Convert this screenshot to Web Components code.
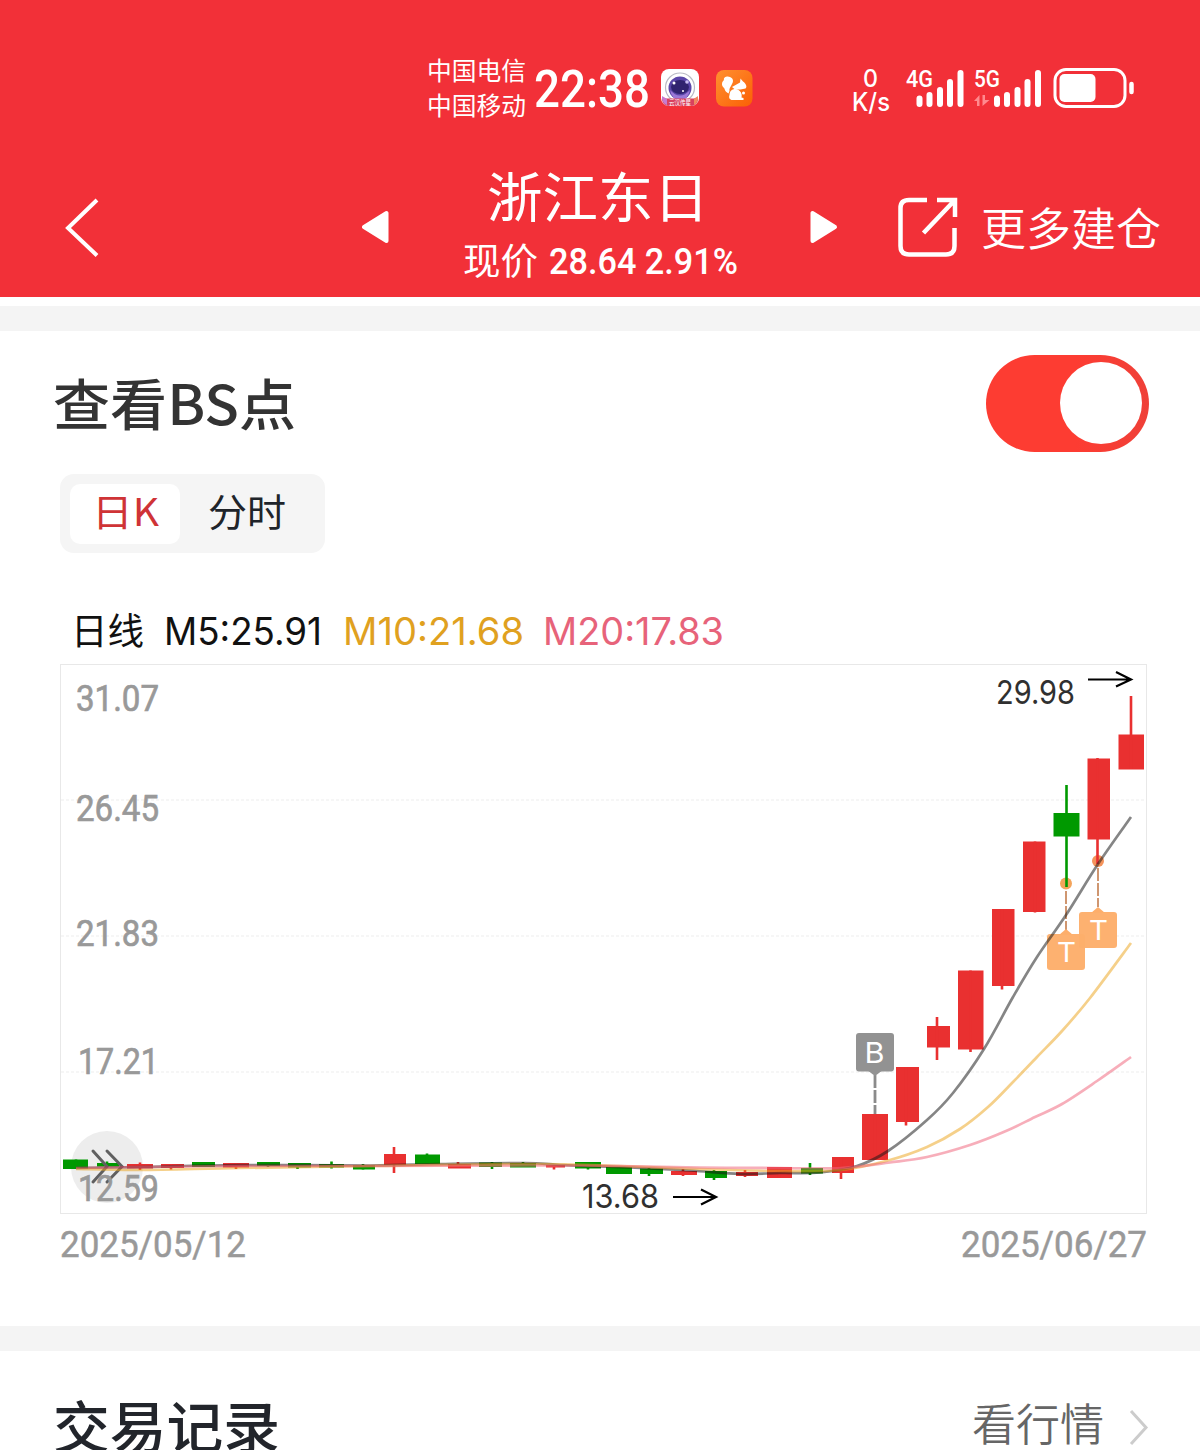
<!DOCTYPE html>
<html lang="zh-CN">
<head>
<meta charset="utf-8">
<title>浙江东日</title>
<style>
    body {
        margin: 0;
        height: 1450px;
        overflow: hidden;
        background: #fff;
        font-family: "Noto Sans CJK SC", sans-serif;
    }
</style>
</head>
<body>
<trade-page></trade-page>

<script>
const define = (name, css, html, setup) => {
    const template = document.createElement('template')
    template.innerHTML = `<style>${css}</style>${html}`

    window.customElements.define(name, class extends HTMLElement {
        constructor() {
            super()

            this
                .attachShadow({ mode: 'open' })
                .appendChild(template.content.cloneNode(true))
        }

        connectedCallback() {
            if (setup) setup(this, this.shadowRoot)
        }
    })
}

// One line of text, stretched to an exact width
define('fit-text', `
    :host {
        display: block;
        flex: none;
        white-space: nowrap;
        line-height: 1;
    }

    span {
        display: inline-block;
        transform-origin: 0 50%;
        vertical-align: top;
    }
`, '<span><slot></slot></span>', (host, root) => {
    const span = root.querySelector('span')
    const width = Number(host.getAttribute('width'))
    host.style.fontSize = `${host.getAttribute('size')}px`
    host.style.height = `${host.getAttribute('size')}px`
    host.style.width = `${width}px`
    span.style.transform = `scaleX(${width / span.getBoundingClientRect().width})`
})

define('signal-bars', `
    :host { display: block; }
    svg { display: block; overflow: visible; }
    text { font: 500 24px Roboto, sans-serif; fill: #fff; }
    .data { display: none; }
    :host([data]) .data { display: inline; }
`, `
    <svg width="68" height="40" viewBox="0 0 68 40">
        <text x="0" y="18" lengthAdjust="spacingAndGlyphs"></text>
        <path class="data" d="M0 32L5.500 26V37H3V32zM8.500 26H11V31H15.500L8.500 37z" fill="#ff8a8e"/>
        <g class="bars" stroke="#fff" stroke-width="6" stroke-linecap="round">
            <path d="M3 29.500V35M13 26V35M23.500 21V35M33.500 13V35M44 4V35"/>
        </g>
    </svg>
`, (host, root) => {
    const text = root.querySelector('text')
    text.textContent = host.getAttribute('label')
    text.setAttribute('textLength', host.getAttribute('label-width'))
    root.querySelector('.bars').setAttribute('transform', `translate(${host.getAttribute('offset')} 0)`)
})

define('status-bar', `
    :host {
        display: flex;
        height: 75px;
        padding: 50px 0 0 427px;
        align-items: flex-start;
        color: #fff;
    }

    .carriers { display: grid; gap: 10px; padding-top: 7px; }
    .clock { margin: 14px 0 0 8px; font-family: Roboto, sans-serif; font-weight: 500; }
    .apps { display: flex; gap: 17px; margin: 19px 0 0 11px; }
    .speed { display: grid; gap: 0; margin: 17px 0 0 99px; width: 38px; font: 500 24px Inter, sans-serif; justify-items: center; }
    .speed fit-text:first-child { margin-right: 2px; }
    .signals { display: flex; margin: 19px 0 0 16px; }
    .battery { margin: 17px 0 0 11px; }
    svg { display: block; }
`, `
    <div class="carriers">
        <fit-text size="25" width="99">中国电信</fit-text>
        <fit-text size="25" width="99">中国移动</fit-text>
    </div>
    <fit-text class="clock" size="51" width="116">22:38</fit-text>
    <div class="apps">
        <svg width="38" height="38" viewBox="0 0 38 38">
            <rect width="38" height="37" rx="8" fill="#fff"/>
            <circle cx="19" cy="18.500" r="14.500" fill="none" stroke="#b9bac4" stroke-width="1.200"/>
            <circle cx="19" cy="19" r="11.500" fill="#5a46a8"/>
            <ellipse cx="19" cy="18" rx="9" ry="7" fill="#30236f"/>
            <path d="M9 21q10 11 20 0q-2 10-10 10t-10-10z" fill="#9c78d6"/>
            <circle cx="13" cy="14" r="1.500" fill="#fff"/>
            <circle cx="26" cy="13" r="1.800" fill="#c9bdf2"/>
            <circle cx="22" cy="22" r="1" fill="#fff"/>
            <path d="M1 28l4 1.500h28l4-1.500v3q-1 6-8 6H9q-7 0-8-6z" fill="#d9415f"/>
            <path d="M1 27l5 3v6q-4-1-5-6z" fill="#c77bd0"/>
            <path d="M37 27l-4 3v6q3-1 4-6z" fill="#f08a5e"/>
            <text x="8" y="36" font-size="7" textLength="22" lengthAdjust="spacingAndGlyphs" fill="#fff">云汉传星</text>
        </svg>
        <svg width="37" height="38" viewBox="0 0 37 38">
            <defs>
                <linearGradient id="orange" x1="0" y1="0" x2="1" y2="1">
                    <stop offset="0" stop-color="#ff9030"/><stop offset="1" stop-color="#fb5f05"/>
                </linearGradient>
            </defs>
            <rect y="1" width="36.500" height="36.500" rx="8" fill="url(#orange)"/>
            <path d="M12.500 24.500C8 22 9.500 20 7.500 18.500C5 16 6 12.500 8 11C7 8.500 11 6.500 14 8C18 9.500 17.500 13 15.500 16C14.500 18 13 19.500 13.500 22z" fill="#fff"/>
            <path d="M16 18L24 13.500L24.500 9.500L27 12.500C30 14.500 31.500 18 29.500 19.500L24.500 20.500L19 20.500z" fill="#fff"/>
            <path d="M13.500 26C13.500 21.500 17 19.500 20 20C24.500 21 26.500 25 25.500 28.500L27.500 29V31H16.500C13.500 31 12.500 28.500 13.500 26z" fill="#fff"/>
            <circle cx="27.500" cy="24" r="1.500" fill="#fff"/>
        </svg>
    </div>
    <div class="speed">
        <fit-text size="24" width="15">0</fit-text>
        <fit-text size="25" width="38" style="margin-top:-1px">K/s</fit-text>
    </div>
    <div class="signals">
        <signal-bars label="4G" label-width="27" offset="10.500"></signal-bars>
        <signal-bars label="5G" label-width="26" offset="20" data></signal-bars>
    </div>
    <svg class="battery" width="82" height="42" viewBox="0 0 82 42">
        <rect x="2" y="2.500" width="70" height="37" rx="11" fill="none" stroke="#fff" stroke-width="3"/>
        <rect x="6.500" y="7" width="36" height="28" rx="5" fill="#fff"/>
        <path d="M78.500 17v8" stroke="#fff" stroke-width="4.500" stroke-linecap="round"/>
    </svg>
`)

define('stock-header', `
    :host {
        display: block;
        height: 297px;
        background: #f23038;
        color: #fff;
        overflow: hidden;
    }

    nav { display: flex; height: 172px; align-items: flex-start; }
    svg { display: block; flex: none; }
    .back { margin: 73px 0 0 63px; }
    .prev { margin: 85px 0 0 263px; }
    .stock { display: grid; justify-items: center; gap: 19px; margin: 43px 0 0 72px; width: 276px; }
    .name { margin-right: 4px; }
    .price { display: flex; gap: 11px; }
    .price .num { font-family: Roboto, sans-serif; font-weight: 500; margin-top: 2px; }
    .next { margin: 85px 0 0 72px; }
    .share { margin: 71px 0 0 59px; }
    .more { margin: 79px 0 0 22px; font-weight: 350; }
`, `
    <status-bar></status-bar>
    <nav>
        <svg class="back" width="36" height="60" viewBox="0 0 36 60">
            <path d="M34 2L5 30L34 57.500" fill="none" stroke="#fff" stroke-width="4"/>
        </svg>
        <svg class="prev" width="28" height="34" viewBox="0 0 28 34">
            <path d="M2 17L24.500 3V31z" fill="#fff" stroke="#fff" stroke-width="4" stroke-linejoin="round"/>
        </svg>
        <div class="stock">
            <fit-text class="name" size="54" width="222">浙江东日</fit-text>
            <div class="price">
                <fit-text size="37" width="75">现价</fit-text>
                <fit-text class="num" size="37" width="189">28.64 2.91%</fit-text>
            </div>
        </div>
        <svg class="next" width="28" height="34" viewBox="0 0 28 34">
            <path d="M25 17L2.500 3V31z" fill="#fff" stroke="#fff" stroke-width="4" stroke-linejoin="round"/>
        </svg>
        <svg class="share" width="62" height="62" viewBox="0 0 62 62">
            <path d="M30 4H12Q3.500 4 3.500 12V50Q3.500 58.500 12 58.500H49Q57.500 58.500 57.500 50V32M40 4H58V21M57 5L26.500 37" fill="none" stroke="#fff" stroke-width="4.500"/>
        </svg>
        <fit-text class="more" size="45" width="180">更多建仓</fit-text>
    </nav>
`)

define('section-divider', `
    :host { display: block; height: 25px; background: #f4f4f4; }
`, '')

define('toggle-switch', `
    :host {
        display: flex;
        box-sizing: border-box;
        width: 163px;
        height: 97px;
        padding: 7px;
        justify-content: flex-end;
        border-radius: 49px;
        background: linear-gradient(90deg, #fd3c32 55%, #ef4038);
    }

    i { width: 82px; height: 82px; border-radius: 50%; background: #fff; }
`, '<i></i>')

define('segmented-tabs', `
    :host {
        display: flex;
        box-sizing: border-box;
        width: 265px;
        height: 79px;
        padding: 10px;
        border-radius: 14px;
        background: #f5f5f5;
        color: #20242a;
    }

    .tab { display: flex; height: 60px; box-sizing: border-box; padding-top: 7px; }
    .active { width: 110px; padding-left: 22px; border-radius: 10px; background: #fff; color: #cf3336; }
    .other { padding-left: 28px; }
`, `
    <div class="tab active"><slot name="active"></slot></div>
    <div class="tab other"><slot></slot></div>
`)

// [x, width, body top, body bottom, wick x, wick top, wick bottom, rising]
const candles = [
    [63, 25, 1159.5, 1169, 76, 1159.5, 1169, 0],
    [97, 22, 1163, 1166.5, 107, 1161.5, 1166, 0],
    [127, 26, 1164, 1168.5, 140, 1162.5, 1170, 1],
    [161, 23, 1164, 1168, 171, 1164, 1169.5, 1],
    [192, 23, 1162, 1167, 203, 1162, 1167, 0],
    [223, 26, 1163, 1167.5, 236, 1163, 1169, 1],
    [257, 23, 1162, 1166, 268, 1162, 1167, 0],
    [288, 23, 1163, 1167.5, 297.5, 1163, 1169, 0],
    [319, 25, 1164, 1167.5, 331.5, 1161.5, 1168.5, 0],
    [353, 22, 1165, 1169.5, 363, 1164, 1169.5, 0],
    [384, 22, 1154, 1165, 394, 1147, 1173, 1],
    [415, 25, 1154.5, 1164, 427, 1153.5, 1164, 0],
    [448, 23, 1164, 1168.5, 458, 1162, 1168, 1],
    [479, 23, 1162.5, 1167, 492, 1162, 1169, 0],
    [510, 26, 1163, 1167.5, 523, 1162, 1167, 0],
    [546, 19, 1165, 1167.5, 554, 1165, 1169.5, 1],
    [575, 26, 1162, 1168.5, 588, 1162, 1169.5, 0],
    [606, 26, 1167, 1174, 619, 1167, 1174, 0],
    [640, 23, 1168.5, 1174, 649, 1168, 1176, 0],
    [671, 26, 1171, 1175, 683, 1169, 1176, 1],
    [705, 22, 1171, 1178, 714, 1170, 1180, 0],
    [736, 22, 1172, 1176, 745, 1170, 1177, 1],
    [767, 25, 1167, 1178, 779, 1167, 1178, 1],
    [801, 22, 1168, 1173.5, 810, 1163, 1175, 0],
    [832, 22, 1157, 1173, 841, 1157, 1179, 1],
    [862, 26, 1114, 1160, 875, 1114, 1160, 1],
    [896, 23, 1067, 1122, 906, 1067, 1125.5, 1],
    [927, 23, 1026, 1047.5, 937, 1017, 1060, 1],
    [958, 25.5, 970.5, 1049.5, 970.5, 970.5, 1052, 1],
    [992, 22.5, 909, 986, 1002, 909, 989.5, 1],
    [1023, 22.5, 841.5, 912, 1035, 841.5, 912.5, 1],
    [1053.5, 26, 813, 836.5, 1066.5, 785, 887, 0],
    [1087.5, 22.5, 758.5, 839.5, 1097.5, 758, 864, 1],
    [1118.5, 25.5, 734.5, 769.5, 1131, 696, 769, 1]
]

// M5, M10 and M20, drawn in that order
const averages = [
    ['#161616', [[76, 1168], [140, 1167], [240, 1165], [370, 1165.5], [440, 1164], [525, 1163], [560, 1165], [630, 1167.5], [690, 1170.5], [740, 1174], [780, 1173], [820, 1172.5], [857, 1166], [888, 1151], [927, 1120], [953, 1093], [984, 1049], [1013, 997], [1037, 957], [1066, 915], [1098, 864], [1131, 817]]],
    ['#eba51e', [[76, 1169], [140, 1170], [240, 1168], [370, 1166], [530, 1164], [620, 1166], [700, 1169], [780, 1171], [841, 1170], [888, 1160.5], [927, 1147], [960, 1129], [988, 1107], [1013, 1082], [1037, 1057], [1062, 1031], [1090, 998], [1131, 943]]],
    ['#f0647a', [[76, 1168], [140, 1167], [240, 1166], [370, 1166], [530, 1165.5], [620, 1166], [700, 1167.5], [780, 1168], [841, 1168], [890, 1162.5], [927, 1157], [970, 1145], [1006, 1131], [1035, 1117], [1062, 1104], [1097, 1081], [1131, 1057]]]
]

const curve = points => points.slice(1).reduce((d, point, i) => {
    const before = points[Math.max(0, i - 1)]
    const from = points[i]
    const after = points[Math.min(points.length - 1, i + 2)]
    const c1 = [from[0] + (point[0] - before[0]) / 6, from[1] + (point[1] - before[1]) / 6]
    const c2 = [point[0] - (after[0] - from[0]) / 6, point[1] - (after[1] - from[1]) / 6]
    return `${d}C${c1} ${c2} ${point}`
}, `M${points[0]}`)

const candle = ([x, w, top, bottom, cx, high, low, rising]) => `
    <g fill="${rising ? '#e93030' : '#009900'}">
        <rect x="${x}" y="${top}" width="${w}" height="${bottom - top}"/>
        <rect x="${cx - 1.3}" y="${high}" width="2.6" height="${low - high}"/>
    </g>`

const axis = [['31.07', 711, 76, 83], ['26.45', 821, 76, 83], ['21.83', 946, 76, 83], ['17.21', 1074, 78, 81], ['12.59', 1201, 78, 81]]

// The T badge hangs under its candle
const sellBadge = (x, y) => `
    <path d="M${x - 7} ${y + 1}L${x} ${y - 5}L${x + 7} ${y + 1}z" fill="#fdae6b"/>
    <rect x="${x - 19}" y="${y}" width="38" height="36" rx="3" fill="#fdae6b" fill-opacity=".97"/>
    <text x="${x - 9}" y="${y + 27.5}" textLength="19" lengthAdjust="spacingAndGlyphs" class="badge">T</text>`

define('k-line-chart', `
    :host { display: block; width: 1088px; height: 551px; }
    svg { display: block; }
    .axis { font: 400 37px Roboto, sans-serif; fill: #999; stroke: #999; stroke-width: .7px; }
    .mark { font: 400 32.5px Inter, sans-serif; fill: #303030; }
    .badge { font: 400 27px Inter, sans-serif; fill: #fff; }
    .buy { font-size: 29px; }
`, `
    <svg width="1088" height="551" viewBox="60 664 1088 551">
        <rect x="60.500" y="664.500" width="1086" height="549" fill="#fff" stroke="#e8e8e8"/>
        <path d="M61 800H1146M61 936H1146M61 1072H1146" stroke="#f3f3f3" stroke-width="1.500" stroke-dasharray="3 2"/>
        <circle cx="107" cy="1167" r="36" fill="#ededed"/>
        <circle cx="1066" cy="883.500" r="6" fill="#f4a45b"/>
        <circle cx="1098" cy="861" r="6" fill="#f4935b"/>
        ${candles.map(candle).join('')}
        <path d="M93 1151L107 1166.500L93 1182M107 1151L122 1166.500L107 1182" fill="none" stroke="#606060" stroke-width="3" stroke-linecap="round"/>
        <g stroke-width="2" stroke-dasharray="13 2" fill="none">
            <path d="M875 1075V1114" stroke="#8b8b8b" stroke-width="2.800"/>
            <path d="M1066 891V930M1098 868V907" stroke="#cf9670"/>
        </g>
        ${sellBadge(1066, 934)}
        ${sellBadge(1098, 912)}
        <path d="M867 1070H883L875 1076z" fill="#929292"/>
        <rect x="856" y="1033" width="38" height="38.500" rx="3" fill="#929292"/>
        <text class="badge buy" x="864.500" y="1062.500" textLength="20" lengthAdjust="spacingAndGlyphs">B</text>
        ${averages.map(([color, points]) => `<path d="${curve(points)}" fill="none" stroke="${color}" stroke-opacity=".52" stroke-width="2.700"/>`).join('')}
        ${axis.map(([label, y, x, width]) => `<text class="axis" x="${x}" y="${y}" textLength="${width}" lengthAdjust="spacingAndGlyphs">${label}</text>`).join('')}
        <text class="mark" x="996" y="704" textLength="79" lengthAdjust="spacingAndGlyphs">29.98</text>
        <text class="mark" x="582" y="1208" textLength="77" lengthAdjust="spacingAndGlyphs">13.68</text>
        <path d="M1088 679.500H1130M1116 672L1131 679.500L1116 686.500M673 1197H715M701 1189.500L716 1197L701 1204.500" fill="none" stroke="#000" stroke-width="2.200"/>
    </svg>
`)

define('ma-legend', `
    :host { display: flex; padding: 59px 0 0 11px; color: #111; font-family: Inter, sans-serif; }
    .name { font-family: "Noto Sans CJK SC", sans-serif; margin-top: -1px; }
    .m5 { margin-left: 20px; }
    .m10 { margin-left: 21px; color: #e0a11f; }
    .m20 { margin-left: 19px; color: #e7637a; }
`, `
    <fit-text class="name" size="37" width="73">日线</fit-text>
    <fit-text class="m5" size="38" width="158">M5:25.91</fit-text>
    <fit-text class="m10" size="38" width="181">M10:21.68</fit-text>
    <fit-text class="m20" size="38" width="181">M20:17.83</fit-text>
`)

define('bs-panel', `
    :host { display: block; height: 995px; box-sizing: border-box; padding: 24px 51px 0 60px; }
    header { display: flex; justify-content: space-between; align-items: flex-start; color: #333; font-weight: 500; margin-left: -7px; }
    header fit-text { margin-top: 19px; }
    segmented-tabs { margin-top: 22px; }
    k-line-chart { margin-top: 14px; }
    footer { display: flex; justify-content: space-between; width: 1087px; padding-top: 11px; color: #999; font-family: Roboto, sans-serif; -webkit-text-stroke: .5px #999; }
`, `
    <header>
        <fit-text size="55" width="243">查看BS点</fit-text>
        <toggle-switch></toggle-switch>
    </header>
    <segmented-tabs>
        <fit-text slot="active" size="38" width="67">日K</fit-text>
        <fit-text size="38" width="78">分时</fit-text>
    </segmented-tabs>
    <ma-legend></ma-legend>
    <k-line-chart></k-line-chart>
    <footer>
        <fit-text size="37" width="186">2025/05/12</fit-text>
        <fit-text size="37" width="186">2025/06/27</fit-text>
    </footer>
`)

define('trade-records', `
    :host { display: flex; height: 99px; overflow: hidden; padding: 0 51px 0 53px; align-items: flex-start; }
    .title { margin-top: 45px; color: #22252b; font-weight: 500; }
    .link { margin: 49px 0 0 auto; color: #666; font-weight: 350; }
    svg { margin: 58px 0 0 25px; }
`, `
    <fit-text class="title" size="56" width="227">交易记录</fit-text>
    <fit-text class="link" size="44" width="132">看行情</fit-text>
    <svg width="20" height="38" viewBox="0 0 20 38">
        <path d="M2 2L17 18.500L2 35" fill="none" stroke="#ccc" stroke-width="3"/>
    </svg>
`)

define('trade-page', `
    :host { display: block; width: 1200px; }
    .top { margin-top: 9px; }
`, `
    <stock-header></stock-header>
    <section-divider class="top"></section-divider>
    <bs-panel></bs-panel>
    <section-divider></section-divider>
    <trade-records></trade-records>
`)
</script>
</body>
</html>
